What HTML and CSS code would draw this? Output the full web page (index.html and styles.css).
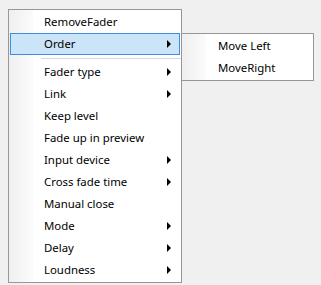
FILE: index.html
```html
<!DOCTYPE html>
<html>
  <head>
    <title>Fader menu</title>
    <link rel="stylesheet" href="styles.css">
  </head>
  <body>
    <div class="menu">
      <div class="item">RemoveFader</div>
      <div class="item sub active">Order</div>
      <div class="sep"></div>
      <div class="item sub">Fader type</div>
      <div class="item sub">Link</div>
      <div class="item">Keep level</div>
      <div class="item">Fade up in preview</div>
      <div class="item sub">Input device</div>
      <div class="item sub">Cross fade time</div>
      <div class="item">Manual close</div>
      <div class="item sub">Mode</div>
      <div class="item sub">Delay</div>
      <div class="item sub">Loudness</div>

      <div class="menu submenu">
        <div class="item">Move Left</div>
        <div class="item">MoveRight</div>
      </div>
    </div>
  </body>
</html>
```

FILE: styles.css
```css
body { margin: 0; background: #f0f0f0; font-family: "Noto Sans", "Open Sans", sans-serif; font-size: 11.4px; color: #000; }

.menu { position: relative; box-sizing: border-box; width: 174px; margin: 9px 0 0 8px; padding: 1px 0; border: 1px solid #979797; background: #fff linear-gradient(to right, #efefef, #fbfbfb 24px, #fff 24px) no-repeat; background-size: 100% 100%; }

.item { position: relative; height: 22px; line-height: 21px; margin: 0 1px; padding-left: 34px; box-sizing: border-box; white-space: nowrap; }
.item.active { background: #cce4f7; border: 1px solid #3d8ee0; line-height: 19px; padding-left: 33px; }
.item.sub::after { content: ""; position: absolute; right: 9px; top: 7px; border-left: 4px solid #000; border-top: 4px solid transparent; border-bottom: 4px solid transparent; }
.item.active.sub::after { right: 8px; top: 6px; }

.sep { height: 6px; margin-left: 32px; position: relative; }
.sep::before { content: ""; position: absolute; left: 0; right: 0; top: 3px; border-top: 1px solid #d7d7d7; }

.submenu { position: absolute; left: 172px; top: 23px; width: 133px; margin: 0; }
.submenu .item { padding-left: 35px; }
```
